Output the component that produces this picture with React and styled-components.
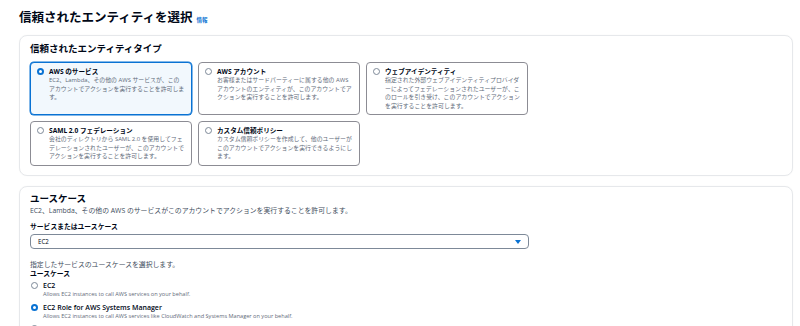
import React from 'react'
import styled, { createGlobalStyle } from 'styled-components'

const GlobalStyle = createGlobalStyle`
  body {
    margin: 0;
    background: #ffffff;
    font-family: "Open Sans", "Noto Sans CJK JP", sans-serif;
    color: #000716;
  }
`

const Page = styled.div`
  padding: 10px 7px 0 19px;
  height: 326px;
  overflow: hidden;
  box-sizing: border-box;
`

const Header = styled.h1`
  display: flex;
  align-items: baseline;
  gap: 4px;
  margin: 0 0 7px;
  font-size: 12.5px;
  line-height: 16px;
  font-weight: 700;
`

const InfoLink = styled.a`
  font-size: 5.5px;
  font-weight: 700;
  color: #0972d3;
`

const Panel = styled.section`
  border: 1px solid #e6e8eb;
  border-radius: 8px;
  padding: ${p => p.$pad || '7px 10px 10px'};
  margin-bottom: 10px;
  box-shadow: 0 0 1px rgba(0, 7, 22, 0.08);
`

const PanelTitle = styled.h2`
  margin: 0 0 ${p => p.$mb || '7px'};
  font-size: 9.5px;
  line-height: 12px;
  font-weight: 700;
`

const TileGrid = styled.div`
  display: grid;
  grid-template-columns: repeat(3, 162px);
  column-gap: 6px;
  row-gap: 6px;
`

const Tile = styled.label`
  display: flex;
  gap: 5px;
  padding: 4px 6px 4px 6px;
  border: 1px solid ${p => (p.$on ? '#0972d3' : '#8c8c94')};
  box-shadow: ${p => (p.$on ? '0 0 0 0.5px #0972d3' : 'none')};
  background: ${p => (p.$on ? '#f2f8fd' : '#ffffff')};
  border-radius: 4px;
  box-sizing: border-box;
  min-height: 45px;
`

const Radio = styled.span`
  flex: 0 0 auto;
  width: 7px;
  height: 7px;
  margin-top: ${p => p.$mt || '1px'};
  border-radius: 50%;
  box-sizing: border-box;
  border: ${p => (p.$on ? '2.2px solid #0972d3' : '1px solid #7d8998')};
  background: #ffffff;
`

const TileBody = styled.div`
  display: flex;
  flex-direction: column;
`

const TileTitle = styled.div`
  font-size: 6.6px;
  line-height: 9px;
  font-weight: 700;
  color: #000716;
`

const TileDesc = styled.div`
  font-size: 5.9px;
  line-height: 8.5px;
  color: #5f6b7a;
`

const Description = styled.p`
  margin: ${p => p.$m || '0'};
  font-size: 6.85px;
  line-height: 9px;
  color: #414d5c;
`

const FieldLabel = styled.div`
  margin: ${p => p.$m || '0'};
  font-size: 6.8px;
  line-height: 9px;
  font-weight: 700;
`

const Select = styled.div`
  width: 499px;
  height: 15px;
  margin-top: 3px;
  box-sizing: border-box;
  display: flex;
  align-items: center;
  justify-content: space-between;
  padding: 0 7px 0 7px;
  border: 1px solid #7d8998;
  border-radius: 4px;
  font-size: 6.2px;
  color: #000716;
`

const Caret = styled.span`
  width: 0;
  height: 0;
  border-left: 3px solid transparent;
  border-right: 3px solid transparent;
  border-top: 4px solid #0972d3;
`

const Options = styled.div`
  display: flex;
  flex-direction: column;
  gap: 4px;
  margin-top: 3px;
  padding-left: 1px;
`

const Option = styled.label`
  display: flex;
  gap: 5px;
`

const OptTitle = styled.div`
  font-size: 7px;
  line-height: 9px;
  font-weight: 600;
`

const OptDesc = styled.div`
  font-size: 5.6px;
  line-height: 8.5px;
  color: #5f6b7a;
`

const tiles = [
  {
    title: 'AWS のサービス',
    desc: 'EC2、Lambda、その他の AWS サービスが、このアカウントでアクションを実行することを許可します。',
    on: true,
  },
  {
    title: 'AWS アカウント',
    desc: 'お客様またはサードパーティーに属する他の AWS アカウントのエンティティが、このアカウントでアクションを実行することを許可します。',
  },
  {
    title: 'ウェブアイデンティティ',
    desc: '指定された外部ウェブアイデンティティプロバイダーによってフェデレーションされたユーザーが、このロールを引き受け、このアカウントでアクションを実行することを許可します。',
  },
  {
    title: 'SAML 2.0 フェデレーション',
    desc: '会社のディレクトリから SAML 2.0 を使用してフェデレーションされたユーザーが、このアカウントでアクションを実行することを許可します。',
  },
  {
    title: 'カスタム信頼ポリシー',
    desc: 'カスタム信頼ポリシーを作成して、他のユーザーがこのアカウントでアクションを実行できるようにします。',
  },
]

const useCases = [
  { title: 'EC2', desc: 'Allows EC2 instances to call AWS services on your behalf.' },
  {
    title: 'EC2 Role for AWS Systems Manager',
    desc: 'Allows EC2 instances to call AWS services like CloudWatch and Systems Manager on your behalf.',
    on: true,
  },
]

export default function App() {
  return (
    <Page>
      <GlobalStyle />
      <Header>
        信頼されたエンティティを選択
        <InfoLink>情報</InfoLink>
      </Header>

      <Panel $pad="7px 10px 9px">
        <PanelTitle>信頼されたエンティティタイプ</PanelTitle>
        <TileGrid>
          {tiles.map(t => (
            <Tile key={t.title} $on={t.on}>
              <Radio $on={t.on} />
              <TileBody>
                <TileTitle>{t.title}</TileTitle>
                <TileDesc>{t.desc}</TileDesc>
              </TileBody>
            </Tile>
          ))}
        </TileGrid>
      </Panel>

      <Panel $pad="6px 10px 10px">
        <PanelTitle $mb="1px">ユースケース</PanelTitle>
        <Description>
          EC2、Lambda、その他の AWS のサービスがこのアカウントでアクションを実行することを許可します。
        </Description>
        <FieldLabel $m="7px 0 0">サービスまたはユースケース</FieldLabel>
        <Select>
          EC2
          <Caret />
        </Select>
        <Description $m="11px 0 0">指定したサービスのユースケースを選択します。</Description>
        <FieldLabel>ユースケース</FieldLabel>
        <Options>
          {useCases.map(u => (
            <Option key={u.title}>
              <Radio $on={u.on} />
              <div>
                <OptTitle>{u.title}</OptTitle>
                <OptDesc>{u.desc}</OptDesc>
              </div>
            </Option>
          ))}
          <Option>
            <Radio />
          </Option>
        </Options>
      </Panel>
    </Page>
  )
}
